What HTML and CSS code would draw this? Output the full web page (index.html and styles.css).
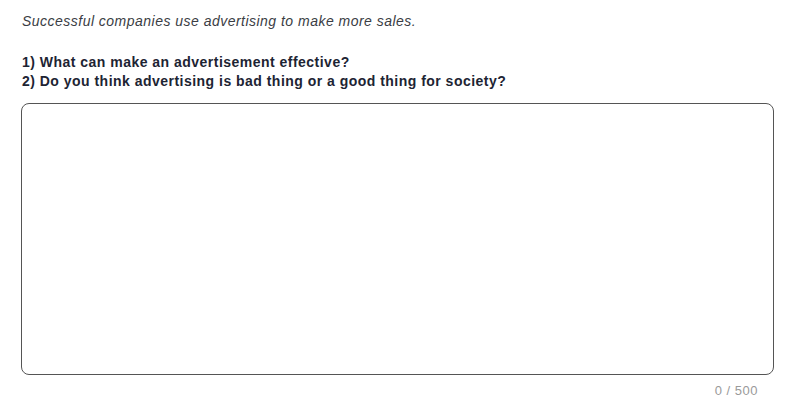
FILE: index.html
```html
<!DOCTYPE html>
<html lang="en">
<head>
    <meta charset="UTF-8">
    <meta name="viewport" content="width=device-width, initial-scale=1.0">
    <title>Writing Task</title>
    <link rel="stylesheet" href="styles.css">
</head>
<body>
    <div class="task">
        <p class="prompt">Successful companies use advertising to make more sales.</p>
        <div class="questions">
            <p>1) What can make an advertisement effective?</p>
            <p>2) Do you think advertising is bad thing or a good thing for society?</p>
        </div>
        <textarea class="answer" maxlength="500"></textarea>
        <div class="counter">0 / 500</div>
    </div>
</body>
</html>
```

FILE: styles.css
```css
body {
    font-family: 'Liberation Sans', Arial, sans-serif;
    background: #fff;
    color: #1d2433;
    margin: 0;
}
.task {
    padding: 12px 21px 0 21px;
}
.prompt {
    margin: 0 0 22px 1px;
    font-style: italic;
    font-size: 14px;
    line-height: 19px;
    letter-spacing: 0.48px;
    color: #3a3d44;
}
.questions {
    margin-bottom: 12px;
}
.questions p {
    margin: 0 0 0 1px;
    font-weight: bold;
    font-size: 14px;
    line-height: 19px;
    letter-spacing: 0.48px;
}
.answer {
    display: block;
    box-sizing: border-box;
    width: 100%;
    height: 272px;
    border: 1px solid #555;
    border-radius: 8px;
    resize: none;
    padding: 10px;
    font-family: inherit;
    font-size: 14px;
}
.counter {
    text-align: right;
    padding-right: 16px;
    margin-top: 8px;
    font-size: 13px;
    letter-spacing: 0.5px;
    color: #9a9a9a;
}
```
